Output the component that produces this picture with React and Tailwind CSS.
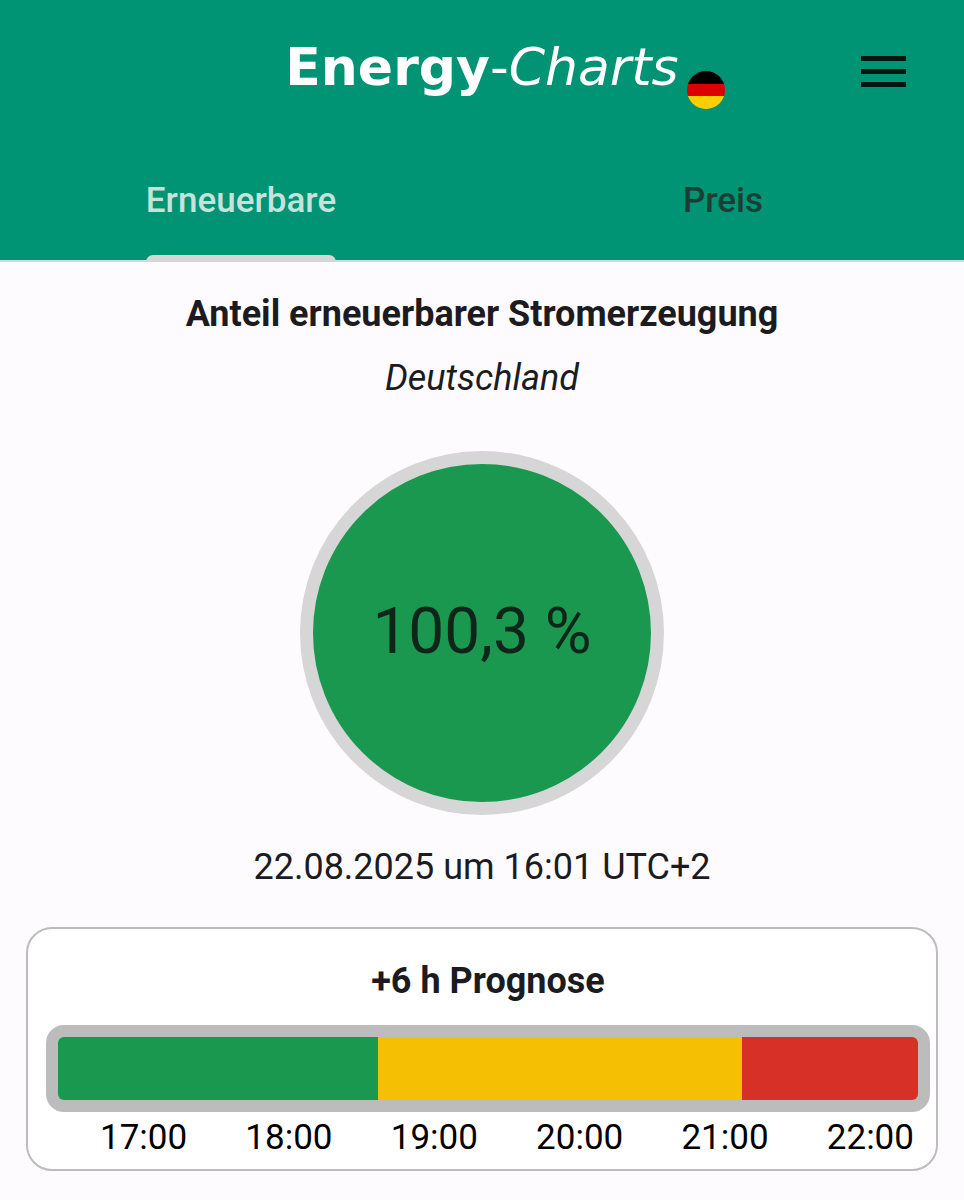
import { useState } from "react";

const TABS = [
  { id: "renewable", label: "Erneuerbare" },
  { id: "price", label: "Preis" },
];

const HOURS = ["17:00", "18:00", "19:00", "20:00", "21:00", "22:00"];

// relative widths of the forecast phases
const SEGMENTS = [
  { color: "bg-[#1b984f]", share: 320 },
  { color: "bg-[#f5bf03]", share: 363 },
  { color: "bg-[#d63027]", share: 176 },
];

function GermanFlag() {
  return (
    <svg viewBox="0 0 38 38" className="w-[38px] h-[38px]" aria-hidden="true">
      <clipPath id="flag-circle">
        <circle cx="19" cy="19" r="19" />
      </clipPath>
      <g clipPath="url(#flag-circle)">
        <rect width="38" height="13" fill="#000000" />
        <rect y="13" width="38" height="12" fill="#dd0000" />
        <rect y="25" width="38" height="13" fill="#ffce00" />
      </g>
    </svg>
  );
}

function Header({ tab, setTab }) {
  return (
    <header className="bg-[#009374] border-b-2 border-[#cbdedb]">
      <div className="grid grid-cols-[1fr_auto_1fr] items-start h-[140px] pt-9">
        <h1 className="col-start-2 text-white text-[52px] leading-[62px] font-['DejaVu_Sans',sans-serif]">
          <span className="font-bold">Energy</span>-<em>Charts</em>
        </h1>
        <div className="flex items-start justify-between pl-2 pr-[58px]">
          <button type="button" aria-label="Land wählen" className="mt-[35px] rounded-full">
            <GermanFlag />
          </button>
          <button type="button" aria-label="Menü" className="mt-5">
            <svg viewBox="0 0 45 31" className="w-[45px] h-[31px]" fill="#00170f" aria-hidden="true">
              <rect width="45" height="5" />
              <rect y="13" width="45" height="5" />
              <rect y="26" width="45" height="5" />
            </svg>
          </button>
        </div>
      </div>

      <div role="tablist" className="grid grid-cols-2 justify-items-center -mb-0.5">
        {TABS.map(({ id, label }) => (
          <button
            key={id}
            type="button"
            role="tab"
            aria-selected={tab === id}
            onClick={() => setTab(id)}
            className={`flex flex-col items-center justify-between h-[122px] pt-10 text-[35px] leading-[42px] font-medium ${
              tab === id ? "text-[#c5e3dc]" : "text-[#1c3d36]"
            }`}
          >
            {label}
            <span className={`w-full h-[7px] rounded-t-lg ${tab === id ? "bg-[#d6d6d6]" : ""}`} />
          </button>
        ))}
      </div>
    </header>
  );
}

function Forecast() {
  return (
    <section className="mx-[26px] mt-10 pt-8 pb-2.5 pl-[18px] pr-1.5 bg-white border-2 border-[#bcbcbc] rounded-[26px]">
      <h3 className="text-center text-4xl leading-10 font-bold">+6 h Prognose</h3>
      <div className="mt-6 p-3 h-[87px] bg-[#bcbcbc] rounded-[18px]">
        <div className="flex h-full overflow-hidden rounded-md">
          {SEGMENTS.map(({ color, share }) => (
            <div key={color} className={color} style={{ flexGrow: share }} />
          ))}
        </div>
      </div>
      <div className="flex justify-between mt-[5px] pl-[54px] pr-4 text-[35px] leading-[42px] text-black">
        {HOURS.map((hour) => (
          <span key={hour}>{hour}</span>
        ))}
      </div>
    </section>
  );
}

export default function App() {
  const [tab, setTab] = useState("renewable");

  return (
    <div className="min-h-screen bg-[#fefbff] text-[#1c1b1f] font-[Roboto,sans-serif]">
      <Header tab={tab} setTab={setTab} />

      <main className="pb-7">
        <h2 className="mt-8 text-center text-4xl leading-10 font-bold">
          Anteil erneuerbarer Stromerzeugung
        </h2>
        <p className="mt-6 text-center text-4xl leading-10 italic">Deutschland</p>

        <div className="flex items-center justify-center mt-[53px] mx-auto size-[364px] rounded-full bg-[#1b984f] border-[13px] border-[#d6d6d6]">
          <span className="text-[64px] leading-[72px] pb-0.5 text-[#0e261a]">100,3 %</span>
        </div>

        <p className="mt-8 text-center text-4xl leading-10">22.08.2025 um 16:01 UTC+2</p>

        <Forecast />
      </main>
    </div>
  );
}
